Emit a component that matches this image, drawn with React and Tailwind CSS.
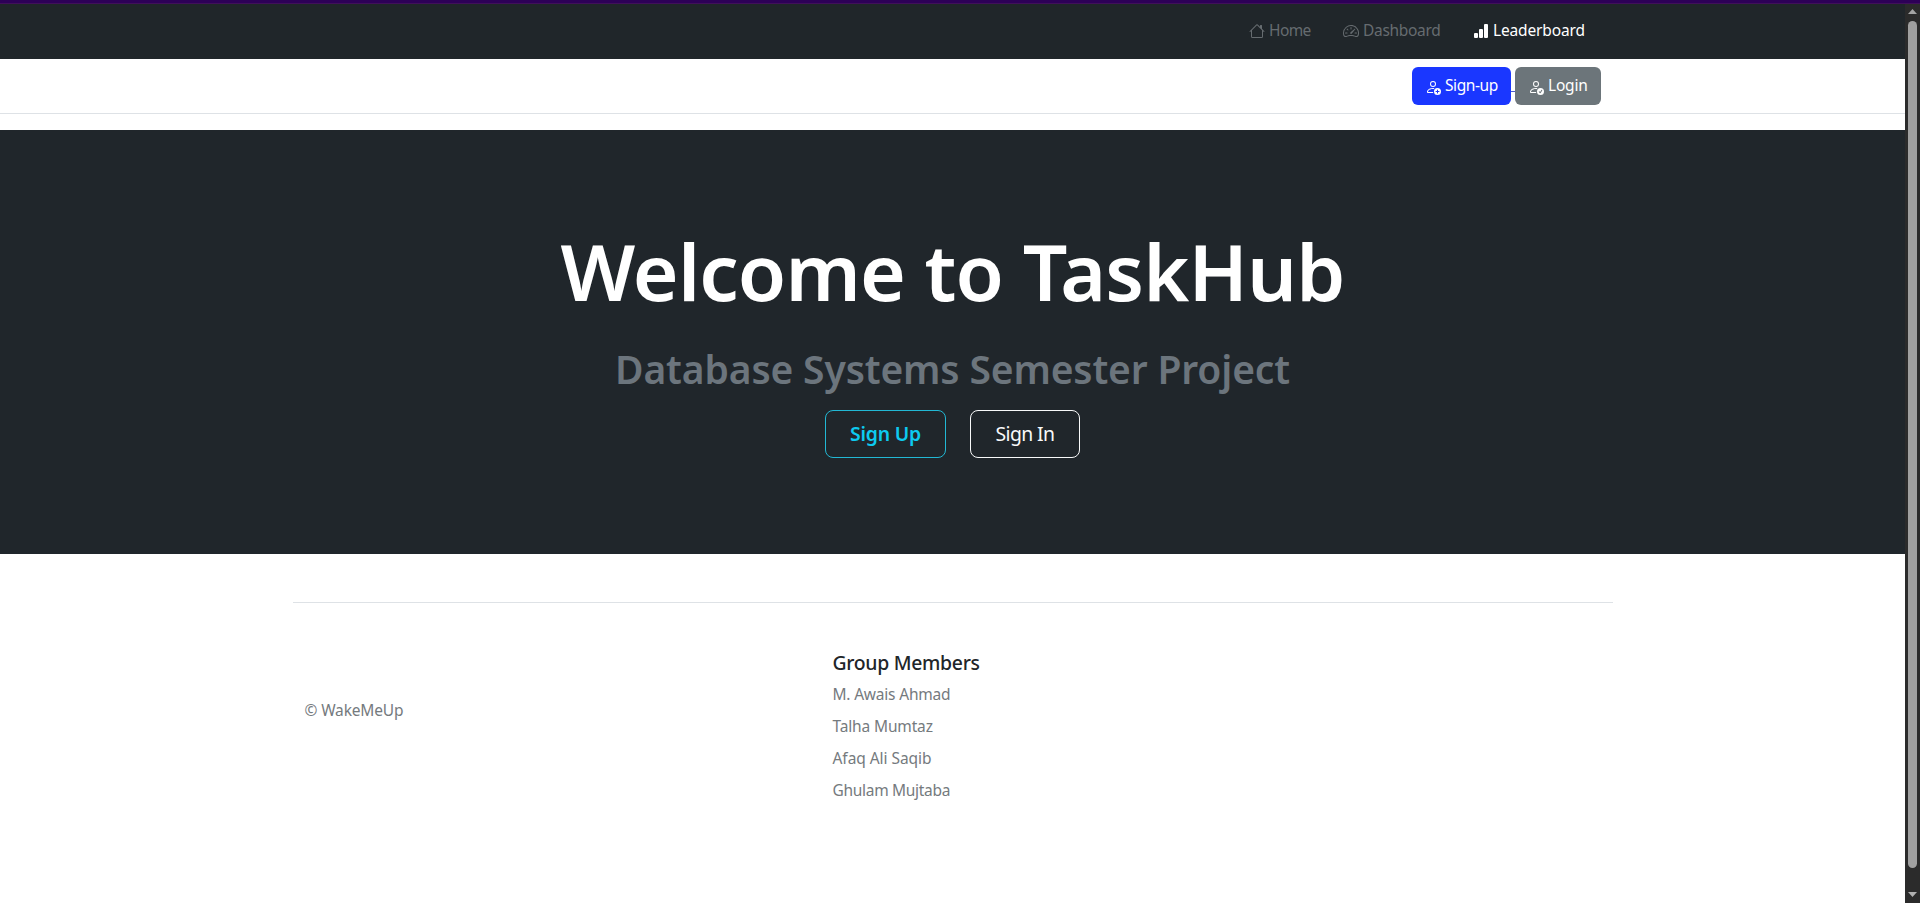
import React from "react";
import { BsHouse, BsSpeedometer2, BsBarChartFill, BsPersonAdd, BsPersonCheck } from "react-icons/bs";

function NavItem({ icon: Icon, label, className, textClass }) {
  return (
    <a className={`flex h-6 items-start whitespace-nowrap ${className}`}>
      <Icon className="mt-[5px] h-4 w-4 shrink-0" />
      <span className={`ml-1 ${textClass}`}>{label}</span>
    </a>
  );
}

const members = [
  { name: "M. Awais Ahmad", track: "tracking-[-0.2px]" },
  { name: "Talha Mumtaz", track: "tracking-[-0.15px]" },
  { name: "Afaq Ali Saqib", track: "tracking-[-0.05px]" },
  { name: "Ghulam Mujtaba", track: "tracking-[-0.3px]" },
];

export default function App() {
  return (
    <div className="flex h-[903px] w-[1920px] flex-col overflow-hidden bg-white font-['Noto_Sans',sans-serif] text-[15.5px] leading-6 text-[#212529]">
      <div className="h-[3px] shrink-0 bg-[#2d0057]" />
      <div className="h-px shrink-0 bg-[#40105a]" />
      <div className="flex min-h-0 flex-1">
        <div className="flex w-[1905px] shrink-0 flex-col">
          <nav className="flex h-[55px] shrink-0 bg-[#20262a] pl-[1249px] pt-[14px]">
            <NavItem icon={BsHouse} label="Home" className="w-[94px] text-[#666c70]" textClass="tracking-[-0.6px]" />
            <NavItem icon={BsSpeedometer2} label="Dashboard" className="w-[130px] text-[#666c70]" textClass="tracking-[-0.3px]" />
            <NavItem icon={BsBarChartFill} label="Leaderboard" className="text-white" textClass="tracking-[-0.15px]" />
          </nav>
          <div className="flex h-[55px] shrink-0 border-b border-[#dee2e6] pl-[1412px] pt-2 text-white">
            <a className="flex h-[38px] w-[99px] rounded-md bg-[#1a37ff] pl-[13px] pt-1.5">
              <BsPersonAdd className="mt-1.5 h-4 w-4 shrink-0" />
              <span className="ml-1 whitespace-nowrap tracking-[-0.4px]">Sign-up</span>
            </a>
            <span className="mt-6 h-px w-1 bg-[#4a5bd0]" />
            <a className="flex h-[38px] w-[86px] rounded-md bg-[#6c757a] pl-[13px] pt-1.5">
              <BsPersonCheck className="mt-1.5 h-4 w-4 shrink-0" />
              <span className="ml-1 whitespace-nowrap tracking-[-0.2px]">Login</span>
            </a>
          </div>
          <section className="mt-4 flex h-[424px] shrink-0 flex-col items-center bg-[#20262b] pt-[93px]">
            <h1 className="h-24 whitespace-nowrap text-[78.5px] font-semibold leading-[96px] tracking-[-0.85px] text-white">Welcome to TaskHub</h1>
            <h2 className="mt-[26px] h-12 whitespace-nowrap text-[39px] font-semibold leading-[48px] tracking-[-0.15px] text-[#6c757d]">Database Systems Semester Project</h2>
            <div className="mt-[17px] flex gap-6 text-[19.4px] leading-[46px]">
              <a className="h-12 w-[121px] rounded-lg border border-[#22b8d4] text-center font-semibold tracking-[-0.2px] text-[#0dcaf0]">Sign Up</a>
              <a className="h-12 w-[110px] rounded-lg border border-[#f8f9fa] text-center tracking-[-0.6px] text-[#f8f9fa]">Sign In</a>
            </div>
          </section>
          <footer className="ml-[292.5px] mt-12 flex w-[1320px] border-t border-[#dee2e6] text-[#757a7e]">
            <p className="w-[540px] pl-3 pt-[95px] tracking-[-0.15px]">© WakeMeUp</p>
            <div className="pt-12">
              <h5 className="h-[31px] text-[19.4px] font-medium leading-6 tracking-[-0.3px] text-[#212529]">Group Members</h5>
              <ul className="flex flex-col gap-2">
                {members.map((m) => (
                  <li key={m.name} className={`h-6 whitespace-nowrap ${m.track}`}>{m.name}</li>
                ))}
              </ul>
            </div>
          </footer>
        </div>
        <div className="flex w-[15px] shrink-0 flex-col items-center bg-[#2b2b2b]">
          <svg className="mt-[5px] h-[5px] w-[9px] shrink-0 fill-[#a3a3a3]" viewBox="0 0 9 5"><path d="M4.5 0L9 5H0Z" /></svg>
          <div className="mt-[7px] h-[847px] w-[9px] shrink-0 rounded-full bg-[#a0a0a0]" />
          <svg className="mt-6 h-[5px] w-[9px] shrink-0 fill-[#b0b0b0]" viewBox="0 0 9 5"><path d="M0 0H9L4.5 5Z" /></svg>
        </div>
      </div>
    </div>
  );
}
